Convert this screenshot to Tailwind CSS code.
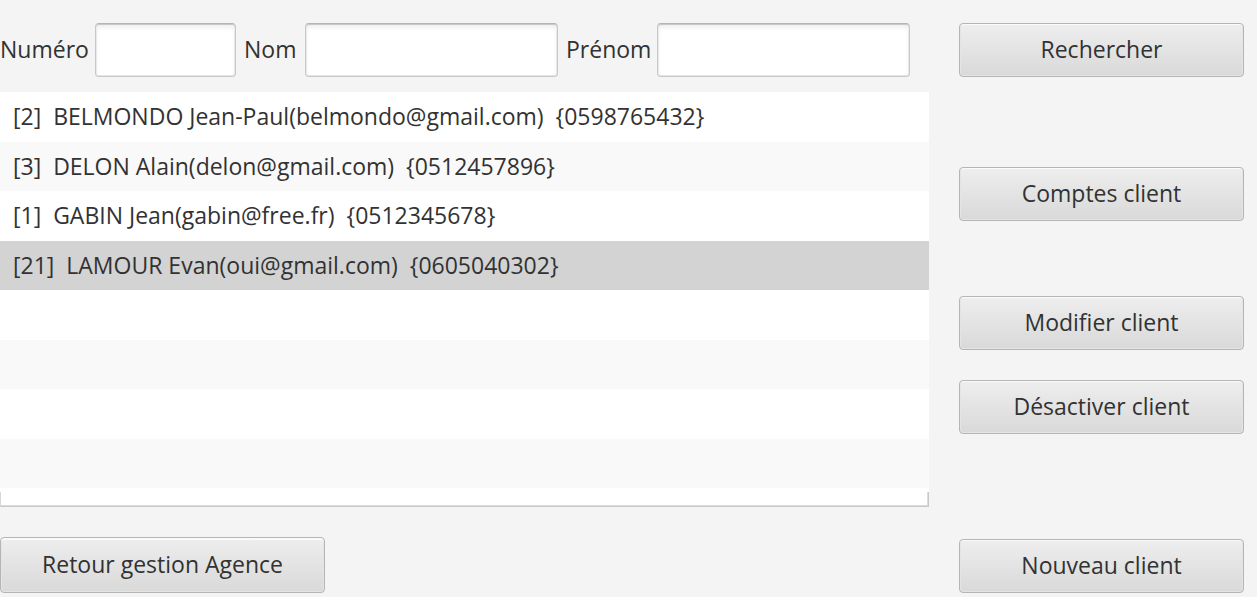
<!DOCTYPE html>
<html lang="fr">
<head>
<meta charset="utf-8">
<title>Gestion des clients</title>
<script src="https://cdn.jsdelivr.net/npm/@tailwindcss/browser@4"></script>
</head>
<body class="min-h-screen bg-[#f4f4f4] font-['Open_Sans','Noto_Sans',sans-serif] text-[23px] leading-8 text-[#323232]">
<div class="flex gap-[30px] pt-[23px] pr-[13px] pb-1">
  <main class="flex min-w-0 flex-1 flex-col items-start">
    <form class="grid w-full grid-cols-[95px_141px_69px_1fr_99px_1fr] items-center pr-[19px]">
      <label for="num" class="pb-0.5">Numéro</label>
      <input id="num" class="h-[54px] w-full min-w-0 rounded border border-[#c8c8c8] border-t-[#b5b5b5] bg-white px-3 shadow-[inset_0_1px_0_#c8c8c8,inset_0_4px_4px_#f0f0f0,inset_0_0_0_1px_#e6e6e6]">
      <label for="nom" class="pb-0.5 pl-2">Nom</label>
      <input id="nom" class="h-[54px] w-full min-w-0 rounded border border-[#c8c8c8] border-t-[#b5b5b5] bg-white px-3 shadow-[inset_0_1px_0_#c8c8c8,inset_0_4px_4px_#f0f0f0,inset_0_0_0_1px_#e6e6e6]">
      <label for="prenom" class="pb-0.5 pl-2">Prénom</label>
      <input id="prenom" class="h-[54px] w-full min-w-0 rounded border border-[#c8c8c8] border-t-[#b5b5b5] bg-white px-3 shadow-[inset_0_1px_0_#c8c8c8,inset_0_4px_4px_#f0f0f0,inset_0_0_0_1px_#e6e6e6]">
    </form>
    <ul class="mt-[15px] w-full bg-white">
      <li class="h-[50px] px-[13px] py-2 whitespace-pre">[2]  BELMONDO Jean-Paul(belmondo@gmail.com)  {0598765432}</li>
      <li class="h-[49px] bg-[#f9f9f9] px-[13px] py-2 whitespace-pre">[3]  DELON Alain(delon@gmail.com)  {0512457896}</li>
      <li class="h-[50px] px-[13px] py-2 whitespace-pre">[1]  GABIN Jean(gabin@free.fr)  {0512345678}</li>
      <li class="h-[49px] bg-[#d3d3d3] px-[13px] py-2 whitespace-pre">[21]  LAMOUR Evan(oui@gmail.com)  {0605040302}</li>
      <li class="h-[50px]"></li>
      <li class="h-[49px] bg-[#f9f9f9]"></li>
      <li class="h-[50px]"></li>
      <li class="h-[49px] bg-[#f9f9f9]"></li>
      <li class="mt-1 h-[15px] border-x border-b border-[#c8c8c8] border-l-[#d8d8d8] shadow-[inset_-1px_-1px_0_#dcdcdc]"></li>
    </ul>
    <button class="mt-[30px] h-14 w-[325px] rounded border border-[#b5b5b5] bg-linear-to-b from-[#eeeeee] to-[#d9d9d9] pb-0.5 shadow-[inset_0_2px_0_#fafafa,inset_0_0_0_1px_#e4e4e4]">Retour gestion Agence</button>
  </main>
  <aside class="flex w-[285px] shrink-0 flex-col">
    <button class="h-[54px] rounded border border-[#b5b5b5] bg-linear-to-b from-[#eeeeee] to-[#d9d9d9] pb-0.5 shadow-[inset_0_1px_0_#fafafa,inset_0_0_0_1px_#e4e4e4]">Rechercher</button>
    <button class="mt-[90px] h-[54px] rounded border border-[#b5b5b5] bg-linear-to-b from-[#eeeeee] to-[#d9d9d9] pb-0.5 shadow-[inset_0_1px_0_#fafafa,inset_0_0_0_1px_#e4e4e4]">Comptes client</button>
    <button class="mt-[75px] h-[54px] rounded border border-[#b5b5b5] bg-linear-to-b from-[#eeeeee] to-[#d9d9d9] pb-0.5 shadow-[inset_0_1px_0_#fafafa,inset_0_0_0_1px_#e4e4e4]">Modifier client</button>
    <button class="mt-[30px] h-[54px] rounded border border-[#b5b5b5] bg-linear-to-b from-[#eeeeee] to-[#d9d9d9] pb-0.5 shadow-[inset_0_1px_0_#fafafa,inset_0_0_0_1px_#e4e4e4]">Désactiver client</button>
    <button class="mt-auto h-[54px] rounded border border-[#b5b5b5] bg-linear-to-b from-[#eeeeee] to-[#d9d9d9] pb-0.5 shadow-[inset_0_1px_0_#fafafa,inset_0_0_0_1px_#e4e4e4]">Nouveau client</button>
  </aside>
</div>
</body>
</html>
